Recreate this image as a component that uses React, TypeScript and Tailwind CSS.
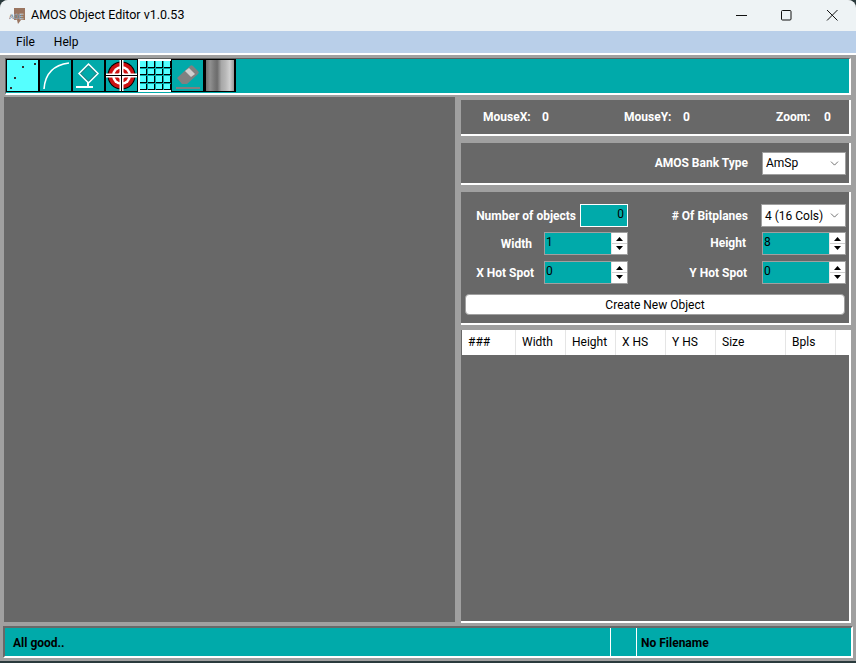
// AMOS Object Editor main window mock.
import { ChevronDown } from 'lucide-react';

const columns = [
  { label: '###', width: 'w-[54px]' },
  { label: 'Width', width: 'w-[50px]' },
  { label: 'Height', width: 'w-[50px]' },
  { label: 'X HS', width: 'w-[50px]' },
  { label: 'Y HS', width: 'w-[50px]' },
  { label: 'Size', width: 'w-[70px]' },
  { label: 'Bpls', width: 'w-[50px]' },
];

function ToolButton({ children, bg = 'bg-[#00aaaa]' }: { children: React.ReactNode; bg?: string }) {
  return (
    <div className={`w-[33px] h-[33px] border border-black ${bg} overflow-hidden`}>
      <svg width="31" height="31" viewBox="0 0 31 31">
        {children}
      </svg>
    </div>
  );
}

function Select({ value, width }: { value: string; width: string }) {
  return (
    <div className={`${width} h-[23px] bg-white border border-[#a0a0a0] flex items-center justify-between pl-[3px] pr-[4px] text-[12px] text-black font-normal`}>
      <span>{value}</span>
      <ChevronDown size={13} strokeWidth={1} />
    </div>
  );
}

function Spinner({ value, width }: { value: string; width: string }) {
  return (
    <div className={`${width} h-[23px] bg-[#00aaaa] border border-[#a0a0a0] flex text-[12px] text-black font-normal`}>
      <span className="flex-1 pl-px -mt-px leading-[20px]">{value}</span>
      <div className="w-[16px] bg-white flex flex-col items-center justify-center gap-[2px] border-l border-[#e8e8e8]">
        <svg width="7" height="4" viewBox="0 0 7 4"><path d="M3.5 0L7 4H0z" fill="#000" /></svg>
        <div className="w-full h-px bg-[#d0d0d0]" />
        <svg width="7" height="4" viewBox="0 0 7 4"><path d="M0 0h7L3.5 4z" fill="#000" /></svg>
      </div>
    </div>
  );
}

function Panel({ className, children }: { className: string; children: React.ReactNode }) {
  return (
    <div className={`bg-[#686868] border-r-2 border-b-2 border-white ${className}`}>{children}</div>
  );
}

export default function App() {
  return (
    <div className="w-[856px] h-[663px] bg-[#2a3a3c] overflow-hidden text-[12px]" style={{ fontFamily: 'Roboto, "Noto Sans", sans-serif' }}>
      <div className="h-[661px] rounded-t-[8px] overflow-hidden bg-[#a0a0a0] flex flex-col">
        {/* Title bar */}
        <div className="h-[31px] bg-[#eef3f5] flex items-center pl-[9px] shrink-0">
          <svg width="17" height="18" viewBox="0 0 17 18" className="mr-[5px]">
            <path d="M5 1h11v12h-4l-3 4-1-4H5z" fill="#9a7560" />
            <text x="0" y="12" fontSize="7.5" fontWeight="700" fill="#3c4a58" stroke="#dfe4ea" strokeWidth="0.3" fontFamily="Roboto, sans-serif">AOE</text>
          </svg>
          <span className="text-[12.5px] text-black">AMOS Object Editor v1.0.53</span>
          <div className="ml-auto flex items-center text-black">
            <svg width="46" height="31" viewBox="0 0 46 31" fill="none" stroke="#111" strokeWidth="1"><path d="M18 15.5h11" /></svg>
            <svg width="46" height="31" viewBox="0 0 46 31" fill="none" stroke="#111" strokeWidth="1"><rect x="17.5" y="10.5" width="9.5" height="9.5" rx="1" /></svg>
            <svg width="46" height="31" viewBox="0 0 46 31" fill="none" stroke="#111" strokeWidth="1"><path d="M17 10l10.5 10.5M27.5 10L17 20.5" /></svg>
          </div>
        </div>

        {/* Menu bar */}
        <div className="h-[22px] bg-[#b9cfe9] flex items-center pl-[16px] gap-[19px] text-[12px] text-black shrink-0">
          <span>File</span>
          <span>Help</span>
        </div>
        <div className="h-[2px] bg-white shrink-0" />

        {/* Toolbar */}
        <div className="mt-[3px] mx-[5px] w-[846px] h-[37px] bg-[#00aaaa] border-t border-l border-[#606060] border-r-2 border-b-2 border-r-white border-b-white flex items-start shrink-0">
          <ToolButton bg="bg-[#55ffff]">
            <rect x="27" y="3" width="2" height="2" fill="#333" />
            <rect x="15" y="6" width="2" height="2" fill="#333" />
            <rect x="7" y="17" width="2" height="2" fill="#333" />
            <rect x="3" y="27" width="2" height="2" fill="#333" />
          </ToolButton>
          <ToolButton>
            <path d="M4 29C5 14 13 5 29 3" fill="none" stroke="#fff" strokeWidth="1.6" />
          </ToolButton>
          <ToolButton>
            <path d="M15.5 4L25 13.5 15.5 23 6 13.5z" fill="none" stroke="#fff" strokeWidth="1.5" />
            <path d="M15.5 6L23 13.5 15.5 21 8 13.5z" fill="none" stroke="#555" strokeWidth="0.6" />
            <rect x="14" y="22" width="2" height="6" fill="#fff" />
            <rect x="3" y="26" width="17" height="2" fill="#fff" />
          </ToolButton>
          <ToolButton>
            <circle cx="15.5" cy="15.5" r="14" fill="#000" />
            <circle cx="15.5" cy="15.5" r="13" fill="#cc1111" />
            <circle cx="15.5" cy="15.5" r="9.5" fill="#fff" />
            <circle cx="15.5" cy="15.5" r="7" fill="#cc1111" />
            <circle cx="15.5" cy="15.5" r="3.5" fill="#fff" />
            <rect x="13.5" y="0" width="4" height="31" fill="#fff" />
            <rect x="0" y="13.5" width="31" height="4" fill="#fff" />
            <rect x="15" y="0" width="1" height="31" fill="#000" />
            <rect x="0" y="15" width="31" height="1" fill="#000" />
          </ToolButton>
          <div className="w-[33px] h-[33px] border-t-2 border-l-2 border-b-2 border-white grid grid-cols-4 grid-rows-4 gap-px bg-[#00aaaa]">
            {Array.from({ length: 16 }).map((_, i) => (
              <div key={i} className="bg-[#55ffff] border-r border-b border-black" />
            ))}
          </div>
          <ToolButton>
            <path d="M5 18L18 6a2 2 0 0 1 3 0l5 5a2 2 0 0 1 0 3L15 24H10z" fill="#808080" />
            <path d="M13 11L17 8l6 6-4 3z" fill="#d0d0d0" />
            <rect x="4" y="27" width="24" height="2" fill="#808080" />
          </ToolButton>
          <div className="w-[32px] h-[33px] border border-black border-l-2 border-r-2 bg-[linear-gradient(90deg,#707070_0%,#909090_15%,#787878_30%,#6c6c6c_40%,#a8a8a8_55%,#b8b8b8_70%,#d0d0d0_85%,#989898_100%)]" />
        </div>

        {/* Body */}
        <div className="flex-1 flex pl-[4px] pt-[2px] min-h-0">
          <div className="w-[451px] h-[525px] bg-[#686868]" />

          <div className="ml-[6px] w-[390px] flex flex-col text-white font-bold">
            <Panel className="mt-[3px] h-[36px] flex items-center pl-[22px]">
              <span className="w-[59px]">MouseX:</span>
              <span className="w-[82px]">0</span>
              <span className="w-[59px]">MouseY:</span>
              <span className="w-[93px]">0</span>
              <span className="w-[48px]">Zoom:</span>
              <span>0</span>
            </Panel>

            <Panel className="mt-[7px] h-[42px] flex items-center justify-end pr-[3px] gap-[14px]">
              <span>AMOS Bank Type</span>
              <Select value="AmSp" width="w-[84px]" />
            </Panel>

            <Panel className="mt-[7px] h-[133px] pl-[4px] pr-[3px] pt-[12px] flex flex-col">
              <div className="flex items-center h-[23px]">
                <span className="w-[111px] text-right">Number of objects</span>
                <div className="ml-[4px] w-[48px] h-[23px] bg-[#00aaaa] border border-white text-right pr-[3px] text-black font-normal leading-[18px]">0</div>
                <span className="ml-auto mr-[13px]"># Of Bitplanes</span>
                <Select value="4 (16 Cols)" width="w-[85px]" />
              </div>
              <div className="flex items-center h-[23px] mt-[5px]">
                <span className="w-[67px] text-right mt-[1px]">Width</span>
                <div className="ml-[12px]"><Spinner value="1" width="w-[84px]" /></div>
                <span className="ml-auto mr-[16px] -mt-[2px]">Height</span>
                <Spinner value="8" width="w-[84px]" />
              </div>
              <div className="flex items-center h-[23px] mt-[6px]">
                <span className="w-[69px] text-right">X Hot Spot</span>
                <div className="ml-[10px]"><Spinner value="0" width="w-[84px]" /></div>
                <span className="ml-auto mr-[15px]">Y Hot Spot</span>
                <Spinner value="0" width="w-[84px]" />
              </div>
              <button className="mt-[10px] h-[21px] w-[380px] bg-white border border-[#a0a0a0] rounded-[4px] text-black font-normal text-[12px]">
                Create New Object
              </button>
            </Panel>

            <Panel className="mt-[5px] h-[293px] pl-px">
              <div className="h-[25px] bg-white flex text-black font-normal">
                {columns.map(c => (
                  <div key={c.label} className={`${c.width} h-full border-r border-[#e5e5e5] pl-[6px] leading-[25px]`}>{c.label}</div>
                ))}
              </div>
            </Panel>
          </div>
        </div>

        {/* Status bar */}
        <div className="mx-[3px] mb-[3px] h-[32px] bg-[#00aaaa] border-t-2 border-l-2 border-[#686868] border-r-2 border-r-white border-b-2 border-b-white flex text-black font-bold shrink-0">
          <div className="w-[606px] pl-[8px] leading-[30px] border-r border-white">All good..</div>
          <div className="w-[26px] border-r border-white" />
          <div className="pl-[4px] leading-[30px]">No Filename</div>
        </div>
      </div>
    </div>
  );
}
